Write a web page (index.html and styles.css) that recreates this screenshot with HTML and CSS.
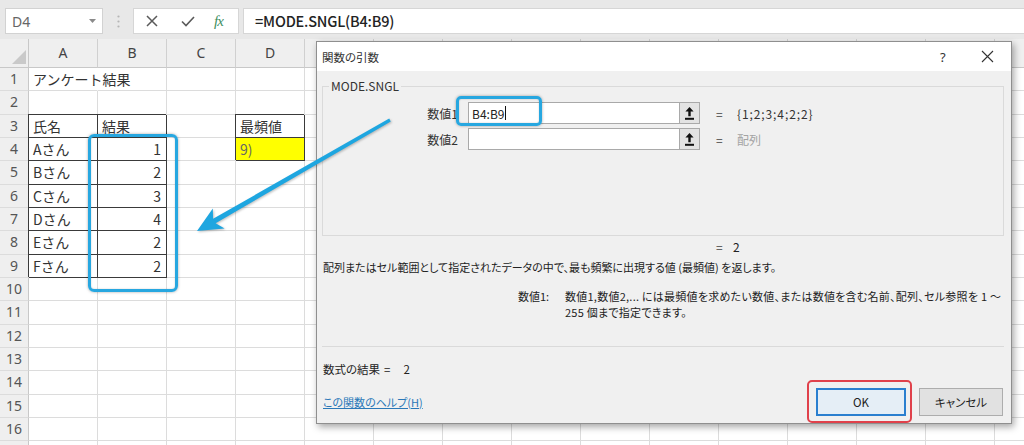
FILE: index.html
```html
<!DOCTYPE html>
<html lang="ja">
<head>
<meta charset="utf-8">
<title>関数の引数</title>
<link rel="stylesheet" href="styles.css">
</head>
<body>
<div class="app">
  <div class="fbar">
    <div class="namebox"><span>D4</span><svg width="7" height="4" viewBox="0 0 7 4"><path d="M0 0h7L3.5 4z" fill="#8a8a8a"/></svg></div>
    <div class="grip"><svg width="3" height="13" viewBox="0 0 3 13"><circle cx="1.5" cy="1.5" r="1.1" fill="#b5b5b5"/><circle cx="1.5" cy="6.5" r="1.1" fill="#b5b5b5"/><circle cx="1.5" cy="11.5" r="1.1" fill="#b5b5b5"/></svg></div>
    <div class="fxbtns">
      <svg class="ic-x" width="12" height="12" viewBox="0 0 12 12"><path d="M1 1L11 11M11 1L1 11" stroke="#5a5a5a" stroke-width="1.5"/></svg>
      <svg class="ic-ok" width="14" height="11" viewBox="0 0 14 11"><path d="M1 5.5L5 9.5L13 1" fill="none" stroke="#5a5a5a" stroke-width="1.6"/></svg>
      <span class="fx">fx</span>
    </div>
    <div class="formula">=MODE.SNGL(B4:B9)</div>
  </div>

  <div class="sheet">
    <div class="row hdr"><div class="rh corner"><svg width="14" height="14" viewBox="0 0 14 14"><path d="M14 0V14H0z" fill="#c9c9c9"/></svg></div><i>A</i><i>B</i><i>C</i><i>D</i><i>E</i><i>F</i><i>G</i><i>H</i><i>I</i><i>J</i><i>K</i><i>L</i><i>M</i><i>N</i><i></i></div>
    <div class="row"><div class="rh">1</div><i class="ov">アンケート結果</i><i></i><i></i><i></i><i></i><i></i><i></i><i></i><i></i><i></i><i></i><i></i><i></i><i></i><i></i></div>
    <div class="row"><div class="rh">2</div><i></i><i></i><i></i><i></i><i></i><i></i><i></i><i></i><i></i><i></i><i></i><i></i><i></i><i></i><i></i></div>
    <div class="row"><div class="rh">3</div><i class="b">氏名</i><i class="b">結果</i><i></i><i class="b">最頻値</i><i></i><i></i><i></i><i></i><i></i><i></i><i></i><i></i><i></i><i></i><i></i></div>
    <div class="row"><div class="rh">4</div><i class="b">Aさん</i><i class="b n">1</i><i></i><i class="b y">9)</i><i></i><i></i><i></i><i></i><i></i><i></i><i></i><i></i><i></i><i></i><i></i></div>
    <div class="row"><div class="rh">5</div><i class="b">Bさん</i><i class="b n">2</i><i></i><i></i><i></i><i></i><i></i><i></i><i></i><i></i><i></i><i></i><i></i><i></i><i></i></div>
    <div class="row"><div class="rh">6</div><i class="b">Cさん</i><i class="b n">3</i><i></i><i></i><i></i><i></i><i></i><i></i><i></i><i></i><i></i><i></i><i></i><i></i><i></i></div>
    <div class="row"><div class="rh">7</div><i class="b">Dさん</i><i class="b n">4</i><i></i><i></i><i></i><i></i><i></i><i></i><i></i><i></i><i></i><i></i><i></i><i></i><i></i></div>
    <div class="row"><div class="rh">8</div><i class="b">Eさん</i><i class="b n">2</i><i></i><i></i><i></i><i></i><i></i><i></i><i></i><i></i><i></i><i></i><i></i><i></i><i></i></div>
    <div class="row"><div class="rh">9</div><i class="b">Fさん</i><i class="b n">2</i><i></i><i></i><i></i><i></i><i></i><i></i><i></i><i></i><i></i><i></i><i></i><i></i><i></i></div>
    <div class="row"><div class="rh">10</div><i></i><i></i><i></i><i></i><i></i><i></i><i></i><i></i><i></i><i></i><i></i><i></i><i></i><i></i><i></i></div>
    <div class="row"><div class="rh">11</div><i></i><i></i><i></i><i></i><i></i><i></i><i></i><i></i><i></i><i></i><i></i><i></i><i></i><i></i><i></i></div>
    <div class="row"><div class="rh">12</div><i></i><i></i><i></i><i></i><i></i><i></i><i></i><i></i><i></i><i></i><i></i><i></i><i></i><i></i><i></i></div>
    <div class="row"><div class="rh">13</div><i></i><i></i><i></i><i></i><i></i><i></i><i></i><i></i><i></i><i></i><i></i><i></i><i></i><i></i><i></i></div>
    <div class="row"><div class="rh">14</div><i></i><i></i><i></i><i></i><i></i><i></i><i></i><i></i><i></i><i></i><i></i><i></i><i></i><i></i><i></i></div>
    <div class="row"><div class="rh">15</div><i></i><i></i><i></i><i></i><i></i><i></i><i></i><i></i><i></i><i></i><i></i><i></i><i></i><i></i><i></i></div>
    <div class="row"><div class="rh">16</div><i></i><i></i><i></i><i></i><i></i><i></i><i></i><i></i><i></i><i></i><i></i><i></i><i></i><i></i><i></i></div>
    <div class="row"><div class="rh"></div><i></i><i></i><i></i><i></i><i></i><i></i><i></i><i></i><i></i><i></i><i></i><i></i><i></i><i></i><i></i></div>
  </div>

  <div class="hl hl-sheet"></div>

  <div class="dialog">
    <div class="dtitle">
      <span class="dt">関数の引数</span>
      <span class="q">?</span>
      <svg class="close" width="13" height="13" viewBox="0 0 13 13"><path d="M1 1L12 12M12 1L1 12" stroke="#333" stroke-width="1.1"/></svg>
    </div>
    <div class="dbody">
      <fieldset class="grp">
        <legend>MODE.SNGL</legend>
        <div class="args">
          <div class="arg">
            <span class="lbl">数値1</span>
            <div class="inp"><span>B4:B9</span><span class="tcur"></span></div>
            <div class="ref"><svg width="9" height="13" viewBox="0 0 9 13"><path d="M4.5 0L8.6 4.6H5.7V9.2H3.3V4.6H0.4z" fill="#111"/><rect x="0" y="10.8" width="9" height="2" fill="#111"/></svg></div>
            <span class="eq">=</span>
            <span class="res">{1;2;3;4;2;2}</span>
          </div>
          <div class="arg">
            <span class="lbl">数値2</span>
            <div class="inp"></div>
            <div class="ref"><svg width="9" height="13" viewBox="0 0 9 13"><path d="M4.5 0L8.6 4.6H5.7V9.2H3.3V4.6H0.4z" fill="#111"/><rect x="0" y="10.8" width="9" height="2" fill="#111"/></svg></div>
            <span class="eq">=</span>
            <span class="res dim">配列</span>
          </div>
        </div>
      </fieldset>
      <div class="total"><span class="eq">=</span><span class="tv">2</span></div>
      <div class="desc">配列またはセル範囲として指定されたデータの中で、最も頻繁に出現する値 (最頻値) を返します。</div>
      <div class="arghelp"><span class="ahl">数値1:</span><span class="aht">数値1,数値2,... には最頻値を求めたい数値、または数値を含む名前、配列、セル参照を 1 ～<br>255 個まで指定できます。</span></div>
      <div class="sep"></div>
      <div class="result"><span>数式の結果</span><span class="req">=</span><span class="rv">2</span></div>
      <div class="foot">
        <a class="help">この関数のヘルプ(H)</a>
        <button class="btn ok">OK</button>
        <button class="btn cancel">キャンセル</button>
      </div>
    </div>
  </div>

  <div class="hl hl-dlg"></div>
  <div class="redbox"></div>

  <svg class="arrow" width="1024" height="445" viewBox="0 0 1024 445">
    <polygon points="390.8,121.4 215.6,223.2 224.6,228.4 197,231 212.8,208.6 213.1,218.8 389.2,118.6" fill="#1ea6e0"/>
  </svg>
</div>
</body>
</html>
```

FILE: styles.css
```css
* { box-sizing: border-box; }
html, body { margin: 0; padding: 0; }
body {
  width: 1024px;
  height: 445px;
  overflow: hidden;
  background: #fff;
  font-family: "Noto Sans CJK JP", "Noto Sans", sans-serif;
  color: #333;
}
.app { position: relative; width: 1024px; height: 445px; overflow: hidden; }

/* formula bar */
.fbar {
  height: 39px;
  background: #e8e8e8;
  display: flex;
  align-items: flex-start;
  padding: 8px 0 0 5px;
}
.namebox {
  width: 98px;
  height: 26px;
  background: #fff;
  border: 1px solid #d2d2d2;
  display: flex;
  align-items: center;
  justify-content: space-between;
  padding: 0 6px 0 6px;
  font-family: "Noto Sans", sans-serif;
  font-size: 14px;
  color: #666;
}
.grip { width: 30px; height: 26px; display: flex; align-items: center; justify-content: center; }
.fxbtns {
  width: 106px;
  height: 26px;
  background: #fff;
  border: 1px solid #d6d6d6;
  display: flex;
  align-items: center;
  padding-left: 12px;
}
.ic-ok { margin-left: 23px; }
.fx {
  margin-left: 19px;
  font-family: "Liberation Serif", serif;
  font-style: italic;
  font-size: 15px;
  color: #3f8f5f;
  letter-spacing: -1px;
}
.formula {
  flex: 1;
  height: 26px;
  margin-left: 4px;
  background: #fff;
  border: 1px solid #d6d6d6;
  border-right: none;
  padding-left: 11px;
  font-size: 14.5px;
  font-weight: 500;
  letter-spacing: -0.2px;
  line-height: 24px;
  color: #222;
}

/* sheet */
.sheet { display: flex; flex-direction: column; }
.row { display: flex; flex: none; height: 23px; }
.row:nth-child(3n) { height: 24px; }
.row > * {
  flex: none;
  border-right: 1px solid #dcdcdc;
  border-bottom: 1px solid #dcdcdc;
}
.rh {
  width: 29px;
  background: #efefef;
  border-right-color: #c8c8c8 !important;
  text-align: center;
  font-family: "Noto Sans", sans-serif;
  font-size: 14px;
  color: #555;
  line-height: 22px;
}
.row > i {
  width: 69px;
  font-style: normal;
  font-size: 14px;
  line-height: 22px;
  padding: 0 4px;
  white-space: nowrap;
  color: #333;
}
.hdr { height: 29px; }
.hdr > i, .hdr > .rh {
  background: #efefef;
  border-right-color: #d0d0d0;
  border-bottom-color: #c8c8c8;
  text-align: center;
  line-height: 28px;
  font-family: "Noto Sans", sans-serif;
  color: #444;
}
.corner { display: flex; align-items: flex-end; justify-content: flex-end; padding: 0 2px 3px 0; }
.ov { border-right-color: transparent !important; overflow: visible; }
.row > .b {
  border-right-color: #3a3a3a;
  border-bottom-color: #3a3a3a;
  box-shadow: -1px -1px 0 #3a3a3a;
}
.row > .n { text-align: right; padding-right: 5px; }
.row > .y { background: #ffff00; color: #666; }

/* highlight overlays */
.hl {
  position: absolute;
  border: 3px solid #27a7e0;
  border-radius: 6px;
  box-shadow: 0 0 3px rgba(0, 0, 0, 0.35), inset 0 0 2px rgba(0, 0, 0, 0.2);
  z-index: 3;
}
.hl-sheet { left: 88px; top: 134px; width: 90px; height: 158px; }
.hl-dlg { left: 456px; top: 96px; width: 86px; height: 30px; border-radius: 5px; }
.redbox {
  position: absolute;
  left: 807px;
  top: 380px;
  width: 105px;
  height: 43px;
  border: 2px solid #e0414b;
  border-radius: 5px;
  z-index: 3;
}
.arrow {
  position: absolute;
  left: 0;
  top: 0;
  z-index: 4;
  filter: drop-shadow(1px 1px 1px rgba(0, 0, 0, 0.25));
}

/* dialog */
.dialog {
  position: absolute;
  left: 316px;
  top: 41px;
  width: 696px;
  height: 383px;
  border: 1px solid #8f8f8f;
  background: #f0f0f0;
  box-shadow: 2px 3px 7px rgba(0, 0, 0, 0.35);
  display: flex;
  flex-direction: column;
  font-size: 12px;
  color: #222;
  font-feature-settings: "palt";
  z-index: 2;
}
.dtitle {
  height: 29px;
  flex: none;
  background: #fff;
  display: flex;
  align-items: center;
  padding-left: 5px;
}
.dt { flex: 1; color: #333; font-size: 11.5px; }
.q { width: 10px; margin-right: 31px; color: #333; font-size: 13px; font-family: "Noto Sans", sans-serif; }
.close { margin-right: 17px; }
.dbody { flex: 1; padding: 0 7px 0 5px; display: flex; flex-direction: column; }
.grp {
  margin: 7px 0 0 0;
  padding: 8px 0 85px 0;
  border: 1px solid #dadada;
  min-width: 0;
}
.grp legend {
  margin-left: 6px;
  padding: 0 2px;
  line-height: 16px;
  color: #333;
}
.args { display: flex; flex-direction: column; gap: 4px; }
.arg { display: flex; align-items: center; height: 22px; }
.lbl { width: 135px; margin-right: 10px; text-align: right; color: #333; }
.inp {
  width: 211px;
  height: 22px;
  background: #fff;
  border: 1px solid #a9a9a9;
  border-right: none;
  padding-left: 3px;
  display: flex;
  align-items: center;
  color: #222;
}
.tcur { width: 1px; height: 14px; background: #111; margin-left: 1px; }
.ref {
  width: 21px;
  height: 22px;
  background: #e3e3e3;
  border: 1px solid #a9a9a9;
  display: flex;
  align-items: center;
  justify-content: center;
}
.eq { width: 7px; margin-left: 16px; color: #444; }
.res { margin-left: 14px; color: #333; letter-spacing: 0.9px; }
.res.dim { color: #a3a3a3; letter-spacing: 0; }
.total { margin-top: 3px; line-height: 16px; padding-left: 394px; display: flex; }
.total .eq { margin-left: 0; }
.tv { margin-left: 10px; }
.desc { margin-top: 4px; line-height: 16px; padding-left: 1px; white-space: nowrap; font-size: 11px; }
.arghelp { margin-top: 13px; line-height: 16px; padding-left: 196px; display: flex; white-space: nowrap; font-size: 11px; }
.ahl { width: 47px; flex: none; }
.aht { letter-spacing: 0.25px; }
.sep { margin-top: 26px; height: 1px; background: #dadada; flex: none; }
.result { margin-top: 14px; line-height: 16px; padding-left: 1px; display: flex; font-size: 11.5px; }
.req { margin-left: 4px; }
.rv { margin-left: 13px; }
.foot { margin-top: 11px; height: 28px; display: flex; align-items: center; }
.help { color: #2a78b8; text-decoration: underline; padding-left: 1px; margin-right: auto; cursor: pointer; font-size: 11px; }
.btn {
  height: 28px;
  font: inherit;
  font-size: 11.5px;
  color: #222;
  background: #e1e1e1;
  border: 1px solid #adadad;
  padding: 0;
  margin: 0;
}
.ok { width: 90px; background: #e5eef6; border: 2px solid #2b7fcf; }
.cancel { width: 84px; margin-left: 13px; margin-right: 1px; }
```
